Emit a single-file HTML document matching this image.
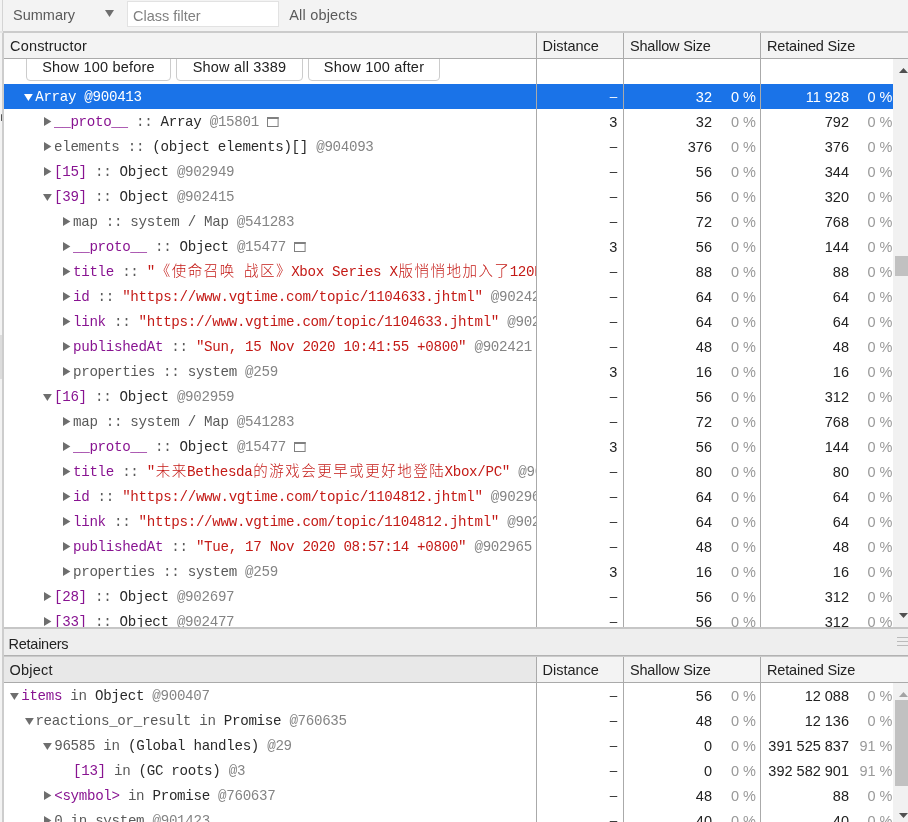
<!DOCTYPE html>
<html lang="zh"><head><meta charset="utf-8"><title>Heap snapshot</title><style>
html,body{margin:0;padding:0;}
body{width:908px;height:822px;overflow:hidden;background:#fff;position:relative;font-family:"Liberation Sans","Noto Sans CJK SC",sans-serif;font-size:14.5px;color:#222;}
#wrap{position:absolute;left:0;top:0;width:908px;height:822px;overflow:hidden;will-change:transform;}
.abs{position:absolute;}
.mono{font-family:"Liberation Mono","Noto Sans CJK SC",monospace;font-size:14.2px;letter-spacing:-0.321px;white-space:pre;}
.cj{font-size:14.5px;font-weight:300;letter-spacing:1.5px;position:relative;top:-0.5px;margin-left:0.75px;margin-right:-0.75px;}
.row{position:absolute;left:4px;width:889px;height:25px;line-height:25px;overflow:hidden;}
.row.sel{background:#1a73e8;color:#fff;}
.row.sel span{color:#fff !important;}
.c0{position:absolute;left:0;top:0;width:532px;height:25px;overflow:hidden;}
.c0 .t{position:absolute;top:1px;left:0;line-height:25px;}
.num{position:absolute;top:1px;height:25px;line-height:25px;text-align:right;white-space:pre;font-size:14.5px;}
.pct{color:#999;}
.dash{position:relative;top:-1px;font-size:13.5px;}
.p{color:#881391;}
.s{color:#c41a16;}
.g{color:#848484;}
.d{color:#5a5a5a;}
.k{color:#2a2a2a;}
.vline{position:absolute;width:1px;background:#aaa;}
.hline{position:absolute;height:1px;left:4px;right:0;}
.hdr{position:absolute;left:4px;right:0;background:#f3f3f3;}
.hdr span{position:absolute;top:0;white-space:pre;}
.btn{position:absolute;top:52px;height:29px;letter-spacing:0.2px;border:1px solid #ccc;border-radius:4px;background:#fff;box-sizing:border-box;text-align:center;line-height:29px;font-size:14.5px;color:#222;white-space:pre;}
svg{position:absolute;overflow:visible;}
</style></head><body><div id="wrap">
<div class="abs" style="left:0;top:0;width:2px;height:822px;background:#f3f3f3"></div>
<div class="abs" style="left:0;top:335px;width:2px;height:44px;background:#dcdcdc"></div>
<div class="abs" style="left:2px;top:0;width:1px;height:31px;background:#d4d4d4"></div>
<div class="abs" style="left:2px;top:33px;width:2px;height:789px;background:#cdcdcd"></div>
<div class="abs" style="left:1px;top:114px;width:1px;height:7px;background:#555;border-radius:1px"></div>
<div class="abs" style="left:3px;top:0;right:0;height:31px;background:#f3f3f3"></div>
<div class="abs" style="left:0;top:31px;right:0;height:2px;background:#e4e4e4"></div>
<div class="abs" style="left:3px;top:31px;right:0;height:2px;background:#cbcbcb"></div>
<span class="abs" style="left:13px;top:0;line-height:31px;color:#5a5a5a;white-space:pre">Summary</span>
<svg style="left:105px;top:10px" width="9" height="7" viewBox="0 0 9 7"><polygon points="0,0 9,0 4.5,7" fill="#6e6e6e"/></svg>
<div class="abs" style="left:127px;top:1px;width:152px;height:26px;box-sizing:border-box;background:#fff;border:1px solid #e2e2e2"></div>
<span class="abs" style="left:133px;top:0;line-height:33px;color:#808080;white-space:pre">Class filter</span>
<span class="abs" style="left:289.2px;top:0;line-height:31px;color:#5a5a5a;letter-spacing:0.2px;white-space:pre">All objects</span>
<div class="btn" style="left:26px;width:145px">Show 100 before</div>
<div class="btn" style="left:176px;width:127px">Show all 3389</div>
<div class="btn" style="left:308px;width:132px">Show 100 after</div>
<div class="row sel" style="top:84px"><div class="c0"><svg style="left:20.40px;top:10.00px" width="9" height="7" viewBox="0 0 9 7"><polygon points="0,0 8.8,0 4.4,7" fill="#fff"/></svg><span class="t mono" style="left:31.20px"><span class="k">Array </span><span class="g">@900413</span></span></div><span class="num " style="right:275.70px"><span class="dash">–</span></span><span class="num " style="right:181.00px">32</span><span class="num pct" style="right:137.00px">0 %</span><span class="num " style="right:44.00px">11 928</span><span class="num pct" style="right:0.50px">0 %</span></div>
<div class="row" style="top:109px"><div class="c0"><svg style="left:40.10px;top:8.00px" width="8" height="9" viewBox="0 0 8 9"><polygon points="0,0 7.4,4.5 0,9" fill="#6e6e6e"/></svg><span class="t mono" style="left:50.00px"><span class="p">__proto__</span><span class="d"> :: </span><span class="k">Array </span><span class="g">@15801</span> <svg style="position:relative;display:inline-block;vertical-align:-1px" width="12" height="10" viewBox="0 0 12 10"><rect x="0.5" y="0.5" width="10.6" height="9" fill="none" stroke="#808080" stroke-width="1"/><rect x="0" y="0" width="11.6" height="2" fill="#808080"/></svg></span></div><span class="num " style="right:275.70px">3</span><span class="num " style="right:181.00px">32</span><span class="num pct" style="right:137.00px">0 %</span><span class="num " style="right:44.00px">792</span><span class="num pct" style="right:0.50px">0 %</span></div>
<div class="row" style="top:134px"><div class="c0"><svg style="left:40.10px;top:8.00px" width="8" height="9" viewBox="0 0 8 9"><polygon points="0,0 7.4,4.5 0,9" fill="#6e6e6e"/></svg><span class="t mono" style="left:50.00px"><span class="d">elements :: </span><span class="k">(object elements)[] </span><span class="g">@904093</span></span></div><span class="num " style="right:275.70px"><span class="dash">–</span></span><span class="num " style="right:181.00px">376</span><span class="num pct" style="right:137.00px">0 %</span><span class="num " style="right:44.00px">376</span><span class="num pct" style="right:0.50px">0 %</span></div>
<div class="row" style="top:159px"><div class="c0"><svg style="left:40.10px;top:8.00px" width="8" height="9" viewBox="0 0 8 9"><polygon points="0,0 7.4,4.5 0,9" fill="#6e6e6e"/></svg><span class="t mono" style="left:50.00px"><span class="p">[15]</span><span class="d"> :: </span><span class="k">Object </span><span class="g">@902949</span></span></div><span class="num " style="right:275.70px"><span class="dash">–</span></span><span class="num " style="right:181.00px">56</span><span class="num pct" style="right:137.00px">0 %</span><span class="num " style="right:44.00px">344</span><span class="num pct" style="right:0.50px">0 %</span></div>
<div class="row" style="top:184px"><div class="c0"><svg style="left:39.20px;top:10.00px" width="9" height="7" viewBox="0 0 9 7"><polygon points="0,0 8.8,0 4.4,7" fill="#6e6e6e"/></svg><span class="t mono" style="left:50.00px"><span class="p">[39]</span><span class="d"> :: </span><span class="k">Object </span><span class="g">@902415</span></span></div><span class="num " style="right:275.70px"><span class="dash">–</span></span><span class="num " style="right:181.00px">56</span><span class="num pct" style="right:137.00px">0 %</span><span class="num " style="right:44.00px">320</span><span class="num pct" style="right:0.50px">0 %</span></div>
<div class="row" style="top:209px"><div class="c0"><svg style="left:59.10px;top:8.00px" width="8" height="9" viewBox="0 0 8 9"><polygon points="0,0 7.4,4.5 0,9" fill="#6e6e6e"/></svg><span class="t mono" style="left:69.00px"><span class="d">map :: system / Map </span><span class="g">@541283</span></span></div><span class="num " style="right:275.70px"><span class="dash">–</span></span><span class="num " style="right:181.00px">72</span><span class="num pct" style="right:137.00px">0 %</span><span class="num " style="right:44.00px">768</span><span class="num pct" style="right:0.50px">0 %</span></div>
<div class="row" style="top:234px"><div class="c0"><svg style="left:59.10px;top:8.00px" width="8" height="9" viewBox="0 0 8 9"><polygon points="0,0 7.4,4.5 0,9" fill="#6e6e6e"/></svg><span class="t mono" style="left:69.00px"><span class="p">__proto__</span><span class="d"> :: </span><span class="k">Object </span><span class="g">@15477</span> <svg style="position:relative;display:inline-block;vertical-align:-1px" width="12" height="10" viewBox="0 0 12 10"><rect x="0.5" y="0.5" width="10.6" height="9" fill="none" stroke="#808080" stroke-width="1"/><rect x="0" y="0" width="11.6" height="2" fill="#808080"/></svg></span></div><span class="num " style="right:275.70px">3</span><span class="num " style="right:181.00px">56</span><span class="num pct" style="right:137.00px">0 %</span><span class="num " style="right:44.00px">144</span><span class="num pct" style="right:0.50px">0 %</span></div>
<div class="row" style="top:259px"><div class="c0"><svg style="left:59.10px;top:8.00px" width="8" height="9" viewBox="0 0 8 9"><polygon points="0,0 7.4,4.5 0,9" fill="#6e6e6e"/></svg><span class="t mono" style="left:69.00px"><span class="p">title</span><span class="d"> :: </span><span class="s">"<span class="cj">《使命召唤</span> <span class="cj">战区》</span>Xbox Series X<span class="cj">版悄悄地加入了</span>120Hz<span class="cj">模式</span>" </span><span class="g">@902417</span></span></div><span class="num " style="right:275.70px"><span class="dash">–</span></span><span class="num " style="right:181.00px">88</span><span class="num pct" style="right:137.00px">0 %</span><span class="num " style="right:44.00px">88</span><span class="num pct" style="right:0.50px">0 %</span></div>
<div class="row" style="top:284px"><div class="c0"><svg style="left:59.10px;top:8.00px" width="8" height="9" viewBox="0 0 8 9"><polygon points="0,0 7.4,4.5 0,9" fill="#6e6e6e"/></svg><span class="t mono" style="left:69.00px"><span class="p">id</span><span class="d"> :: </span><span class="s">"https://www.vgtime.com/topic/1104633.jhtml" </span><span class="g">@902423</span></span></div><span class="num " style="right:275.70px"><span class="dash">–</span></span><span class="num " style="right:181.00px">64</span><span class="num pct" style="right:137.00px">0 %</span><span class="num " style="right:44.00px">64</span><span class="num pct" style="right:0.50px">0 %</span></div>
<div class="row" style="top:309px"><div class="c0"><svg style="left:59.10px;top:8.00px" width="8" height="9" viewBox="0 0 8 9"><polygon points="0,0 7.4,4.5 0,9" fill="#6e6e6e"/></svg><span class="t mono" style="left:69.00px"><span class="p">link</span><span class="d"> :: </span><span class="s">"https://www.vgtime.com/topic/1104633.jhtml" </span><span class="g">@902419</span></span></div><span class="num " style="right:275.70px"><span class="dash">–</span></span><span class="num " style="right:181.00px">64</span><span class="num pct" style="right:137.00px">0 %</span><span class="num " style="right:44.00px">64</span><span class="num pct" style="right:0.50px">0 %</span></div>
<div class="row" style="top:334px"><div class="c0"><svg style="left:59.10px;top:8.00px" width="8" height="9" viewBox="0 0 8 9"><polygon points="0,0 7.4,4.5 0,9" fill="#6e6e6e"/></svg><span class="t mono" style="left:69.00px"><span class="p">publishedAt</span><span class="d"> :: </span><span class="s">"Sun, 15 Nov 2020 10:41:55 +0800" </span><span class="g">@902421</span></span></div><span class="num " style="right:275.70px"><span class="dash">–</span></span><span class="num " style="right:181.00px">48</span><span class="num pct" style="right:137.00px">0 %</span><span class="num " style="right:44.00px">48</span><span class="num pct" style="right:0.50px">0 %</span></div>
<div class="row" style="top:359px"><div class="c0"><svg style="left:59.10px;top:8.00px" width="8" height="9" viewBox="0 0 8 9"><polygon points="0,0 7.4,4.5 0,9" fill="#6e6e6e"/></svg><span class="t mono" style="left:69.00px"><span class="d">properties :: system </span><span class="g">@259</span></span></div><span class="num " style="right:275.70px">3</span><span class="num " style="right:181.00px">16</span><span class="num pct" style="right:137.00px">0 %</span><span class="num " style="right:44.00px">16</span><span class="num pct" style="right:0.50px">0 %</span></div>
<div class="row" style="top:384px"><div class="c0"><svg style="left:39.20px;top:10.00px" width="9" height="7" viewBox="0 0 9 7"><polygon points="0,0 8.8,0 4.4,7" fill="#6e6e6e"/></svg><span class="t mono" style="left:50.00px"><span class="p">[16]</span><span class="d"> :: </span><span class="k">Object </span><span class="g">@902959</span></span></div><span class="num " style="right:275.70px"><span class="dash">–</span></span><span class="num " style="right:181.00px">56</span><span class="num pct" style="right:137.00px">0 %</span><span class="num " style="right:44.00px">312</span><span class="num pct" style="right:0.50px">0 %</span></div>
<div class="row" style="top:409px"><div class="c0"><svg style="left:59.10px;top:8.00px" width="8" height="9" viewBox="0 0 8 9"><polygon points="0,0 7.4,4.5 0,9" fill="#6e6e6e"/></svg><span class="t mono" style="left:69.00px"><span class="d">map :: system / Map </span><span class="g">@541283</span></span></div><span class="num " style="right:275.70px"><span class="dash">–</span></span><span class="num " style="right:181.00px">72</span><span class="num pct" style="right:137.00px">0 %</span><span class="num " style="right:44.00px">768</span><span class="num pct" style="right:0.50px">0 %</span></div>
<div class="row" style="top:434px"><div class="c0"><svg style="left:59.10px;top:8.00px" width="8" height="9" viewBox="0 0 8 9"><polygon points="0,0 7.4,4.5 0,9" fill="#6e6e6e"/></svg><span class="t mono" style="left:69.00px"><span class="p">__proto__</span><span class="d"> :: </span><span class="k">Object </span><span class="g">@15477</span> <svg style="position:relative;display:inline-block;vertical-align:-1px" width="12" height="10" viewBox="0 0 12 10"><rect x="0.5" y="0.5" width="10.6" height="9" fill="none" stroke="#808080" stroke-width="1"/><rect x="0" y="0" width="11.6" height="2" fill="#808080"/></svg></span></div><span class="num " style="right:275.70px">3</span><span class="num " style="right:181.00px">56</span><span class="num pct" style="right:137.00px">0 %</span><span class="num " style="right:44.00px">144</span><span class="num pct" style="right:0.50px">0 %</span></div>
<div class="row" style="top:459px"><div class="c0"><svg style="left:59.10px;top:8.00px" width="8" height="9" viewBox="0 0 8 9"><polygon points="0,0 7.4,4.5 0,9" fill="#6e6e6e"/></svg><span class="t mono" style="left:69.00px"><span class="p">title</span><span class="d"> :: </span><span class="s">"<span class="cj">未来</span>Bethesda<span class="cj">的游戏会更早或更好地登陆</span>Xbox/PC" </span><span class="g">@902961</span></span></div><span class="num " style="right:275.70px"><span class="dash">–</span></span><span class="num " style="right:181.00px">80</span><span class="num pct" style="right:137.00px">0 %</span><span class="num " style="right:44.00px">80</span><span class="num pct" style="right:0.50px">0 %</span></div>
<div class="row" style="top:484px"><div class="c0"><svg style="left:59.10px;top:8.00px" width="8" height="9" viewBox="0 0 8 9"><polygon points="0,0 7.4,4.5 0,9" fill="#6e6e6e"/></svg><span class="t mono" style="left:69.00px"><span class="p">id</span><span class="d"> :: </span><span class="s">"https://www.vgtime.com/topic/1104812.jhtml" </span><span class="g">@902967</span></span></div><span class="num " style="right:275.70px"><span class="dash">–</span></span><span class="num " style="right:181.00px">64</span><span class="num pct" style="right:137.00px">0 %</span><span class="num " style="right:44.00px">64</span><span class="num pct" style="right:0.50px">0 %</span></div>
<div class="row" style="top:509px"><div class="c0"><svg style="left:59.10px;top:8.00px" width="8" height="9" viewBox="0 0 8 9"><polygon points="0,0 7.4,4.5 0,9" fill="#6e6e6e"/></svg><span class="t mono" style="left:69.00px"><span class="p">link</span><span class="d"> :: </span><span class="s">"https://www.vgtime.com/topic/1104812.jhtml" </span><span class="g">@902963</span></span></div><span class="num " style="right:275.70px"><span class="dash">–</span></span><span class="num " style="right:181.00px">64</span><span class="num pct" style="right:137.00px">0 %</span><span class="num " style="right:44.00px">64</span><span class="num pct" style="right:0.50px">0 %</span></div>
<div class="row" style="top:534px"><div class="c0"><svg style="left:59.10px;top:8.00px" width="8" height="9" viewBox="0 0 8 9"><polygon points="0,0 7.4,4.5 0,9" fill="#6e6e6e"/></svg><span class="t mono" style="left:69.00px"><span class="p">publishedAt</span><span class="d"> :: </span><span class="s">"Tue, 17 Nov 2020 08:57:14 +0800" </span><span class="g">@902965</span></span></div><span class="num " style="right:275.70px"><span class="dash">–</span></span><span class="num " style="right:181.00px">48</span><span class="num pct" style="right:137.00px">0 %</span><span class="num " style="right:44.00px">48</span><span class="num pct" style="right:0.50px">0 %</span></div>
<div class="row" style="top:559px"><div class="c0"><svg style="left:59.10px;top:8.00px" width="8" height="9" viewBox="0 0 8 9"><polygon points="0,0 7.4,4.5 0,9" fill="#6e6e6e"/></svg><span class="t mono" style="left:69.00px"><span class="d">properties :: system </span><span class="g">@259</span></span></div><span class="num " style="right:275.70px">3</span><span class="num " style="right:181.00px">16</span><span class="num pct" style="right:137.00px">0 %</span><span class="num " style="right:44.00px">16</span><span class="num pct" style="right:0.50px">0 %</span></div>
<div class="row" style="top:584px"><div class="c0"><svg style="left:40.10px;top:8.00px" width="8" height="9" viewBox="0 0 8 9"><polygon points="0,0 7.4,4.5 0,9" fill="#6e6e6e"/></svg><span class="t mono" style="left:50.00px"><span class="p">[28]</span><span class="d"> :: </span><span class="k">Object </span><span class="g">@902697</span></span></div><span class="num " style="right:275.70px"><span class="dash">–</span></span><span class="num " style="right:181.00px">56</span><span class="num pct" style="right:137.00px">0 %</span><span class="num " style="right:44.00px">312</span><span class="num pct" style="right:0.50px">0 %</span></div>
<div class="row" style="top:609px"><div class="c0"><svg style="left:40.10px;top:8.00px" width="8" height="9" viewBox="0 0 8 9"><polygon points="0,0 7.4,4.5 0,9" fill="#6e6e6e"/></svg><span class="t mono" style="left:50.00px"><span class="p">[33]</span><span class="d"> :: </span><span class="k">Object </span><span class="g">@902477</span></span></div><span class="num " style="right:275.70px"><span class="dash">–</span></span><span class="num " style="right:181.00px">56</span><span class="num pct" style="right:137.00px">0 %</span><span class="num " style="right:44.00px">312</span><span class="num pct" style="right:0.50px">0 %</span></div>
<div class="hdr" style="top:33px;height:25px;line-height:26px"><span style="left:6px;letter-spacing:0.18px">Constructor</span><span style="left:538.5px">Distance</span><span style="left:626px;letter-spacing:-0.2px">Shallow Size</span><span style="left:763px;letter-spacing:-0.17px">Retained Size</span></div>
<div class="hline" style="top:58px;background:#aaa"></div>
<div class="vline" style="left:536px;top:33px;height:594px"></div>
<div class="vline" style="left:623px;top:33px;height:594px"></div>
<div class="vline" style="left:760px;top:33px;height:594px"></div>
<div class="abs" style="left:893px;top:59px;width:15px;height:568px;background:#f1f1f1"></div>
<svg style="left:899px;top:67.8px" width="9" height="5" viewBox="0 0 9 5"><polygon points="0,5 4.5,0 9,5" fill="#505050"/></svg>
<svg style="left:899px;top:612.7px" width="9" height="5" viewBox="0 0 9 5"><polygon points="0,0 4.5,5 9,0" fill="#505050"/></svg>
<div class="abs" style="left:895px;top:256px;width:13px;height:20px;background:#c1c1c1"></div>
<div class="abs" style="left:4px;right:0;top:627px;height:195px;background:#fff"></div>
<div class="hline" style="top:627px;height:2px;background:#c6c6c6"></div>
<div class="hdr" style="top:629px;height:26px;line-height:31px;background:#eee"><span style="left:4.5px;letter-spacing:-0.25px">Retainers</span></div>
<div class="hline" style="top:655px;height:1px;background:#b2b2b2"></div>
<div class="hline" style="top:656px;height:1px;background:#cacaca"></div>
<div class="hdr" style="top:657px;height:25px;line-height:26px"><div class="abs" style="left:0;top:0;width:532px;height:25px;background:#e8e8e8"></div><span style="left:5.5px;letter-spacing:0.2px">Object</span><span style="left:538.5px">Distance</span><span style="left:626px;letter-spacing:-0.2px">Shallow Size</span><span style="left:763px;letter-spacing:-0.17px">Retained Size</span></div>
<div class="hline" style="top:682px;background:#aaa"></div>
<svg style="left:897px;top:637px" width="11" height="9" viewBox="0 0 11 9"><path d="M0 0.5H11M0 4.5H11M0 8.5H11" stroke="#bbb" stroke-width="1" fill="none"/></svg>
<div class="row" style="top:683px"><div class="c0"><svg style="left:6.40px;top:10.00px" width="9" height="7" viewBox="0 0 9 7"><polygon points="0,0 8.8,0 4.4,7" fill="#6e6e6e"/></svg><span class="t mono" style="left:17.20px"><span class="p">items</span><span class="d"> in </span><span class="k">Object </span><span class="g">@900407</span></span></div><span class="num " style="right:275.70px"><span class="dash">–</span></span><span class="num " style="right:181.00px">56</span><span class="num pct" style="right:137.00px">0 %</span><span class="num " style="right:44.00px">12 088</span><span class="num pct" style="right:0.50px">0 %</span></div>
<div class="row" style="top:708px"><div class="c0"><svg style="left:20.60px;top:10.00px" width="9" height="7" viewBox="0 0 9 7"><polygon points="0,0 8.8,0 4.4,7" fill="#6e6e6e"/></svg><span class="t mono" style="left:31.40px"><span class="d">reactions_or_result in </span><span class="k">Promise </span><span class="g">@760635</span></span></div><span class="num " style="right:275.70px"><span class="dash">–</span></span><span class="num " style="right:181.00px">48</span><span class="num pct" style="right:137.00px">0 %</span><span class="num " style="right:44.00px">12 136</span><span class="num pct" style="right:0.50px">0 %</span></div>
<div class="row" style="top:733px"><div class="c0"><svg style="left:39.40px;top:10.00px" width="9" height="7" viewBox="0 0 9 7"><polygon points="0,0 8.8,0 4.4,7" fill="#6e6e6e"/></svg><span class="t mono" style="left:50.20px"><span class="d">96585 in </span><span class="k">(Global handles) </span><span class="g">@29</span></span></div><span class="num " style="right:275.70px"><span class="dash">–</span></span><span class="num " style="right:181.00px">0</span><span class="num pct" style="right:137.00px">0 %</span><span class="num " style="right:44.00px">391 525 837</span><span class="num pct" style="right:0.50px">91 %</span></div>
<div class="row" style="top:758px"><div class="c0"><span class="t mono" style="left:69.00px"><span class="p">[13]</span><span class="d"> in </span><span class="k">(GC roots) </span><span class="g">@3</span></span></div><span class="num " style="right:275.70px"><span class="dash">–</span></span><span class="num " style="right:181.00px">0</span><span class="num pct" style="right:137.00px">0 %</span><span class="num " style="right:44.00px">392 582 901</span><span class="num pct" style="right:0.50px">91 %</span></div>
<div class="row" style="top:783px"><div class="c0"><svg style="left:40.30px;top:8.00px" width="8" height="9" viewBox="0 0 8 9"><polygon points="0,0 7.4,4.5 0,9" fill="#6e6e6e"/></svg><span class="t mono" style="left:50.20px"><span class="p">&lt;symbol&gt;</span><span class="d"> in </span><span class="k">Promise </span><span class="g">@760637</span></span></div><span class="num " style="right:275.70px"><span class="dash">–</span></span><span class="num " style="right:181.00px">48</span><span class="num pct" style="right:137.00px">0 %</span><span class="num " style="right:44.00px">88</span><span class="num pct" style="right:0.50px">0 %</span></div>
<div class="row" style="top:808px"><div class="c0"><svg style="left:40.30px;top:8.00px" width="8" height="9" viewBox="0 0 8 9"><polygon points="0,0 7.4,4.5 0,9" fill="#6e6e6e"/></svg><span class="t mono" style="left:50.20px"><span class="d">0 in system </span><span class="g">@901423</span></span></div><span class="num " style="right:275.70px"><span class="dash">–</span></span><span class="num " style="right:181.00px">40</span><span class="num pct" style="right:137.00px">0 %</span><span class="num " style="right:44.00px">40</span><span class="num pct" style="right:0.50px">0 %</span></div>
<div class="vline" style="left:536px;top:657px;height:165px"></div>
<div class="vline" style="left:623px;top:657px;height:165px"></div>
<div class="vline" style="left:760px;top:657px;height:165px"></div>
<div class="abs" style="left:893px;top:683px;width:15px;height:139px;background:#f1f1f1"></div>
<svg style="left:899px;top:692px" width="9" height="5" viewBox="0 0 9 5"><polygon points="0,5 4.5,0 9,5" fill="#a3a3a3"/></svg>
<svg style="left:899px;top:812.5px" width="9" height="5" viewBox="0 0 9 5"><polygon points="0,0 4.5,5 9,0" fill="#505050"/></svg>
<div class="abs" style="left:895px;top:700px;width:13px;height:86px;background:#c1c1c1"></div>
</div></body></html>
